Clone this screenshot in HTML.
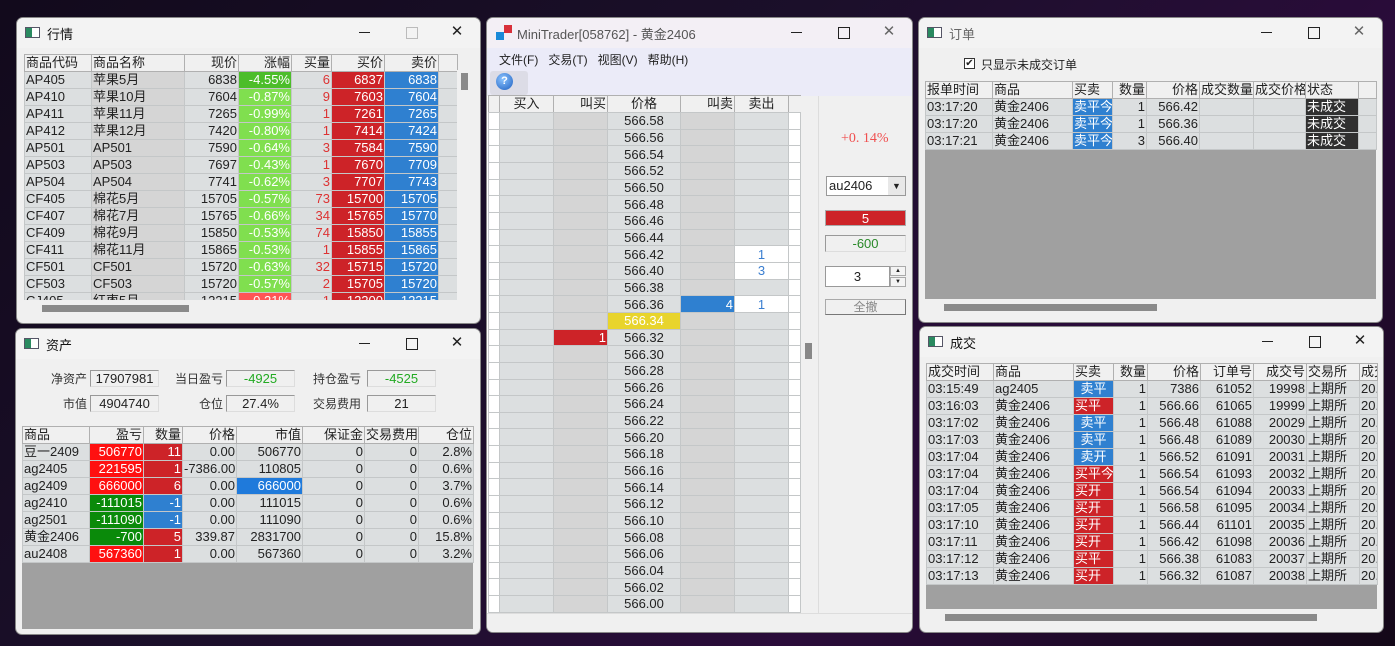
<!DOCTYPE html>
<html><head><meta charset="utf-8"><style>
*{box-sizing:border-box;margin:0;padding:0}
body{width:1395px;height:646px;overflow:hidden;position:relative;background:linear-gradient(135deg,#120a1c 0%,#1b0f2a 40%,#2a0c3a 70%,#140818 100%);font-family:"Liberation Sans","Noto Sans CJK SC",sans-serif;font-size:13px;color:#222}
.win{position:absolute;background:#f0f0f0;border-radius:7px;overflow:hidden;border:1px solid #888}
.tb{position:absolute;left:0;right:0;top:0;height:30px;background:#f3f3f3}
.tt{position:absolute;left:30px;top:6px;font-size:13px;color:#111}
.ic{position:absolute;left:8px;top:9px;width:15px;height:11px;border:1px solid #556;background:linear-gradient(90deg,#2a8a60 0 45%,#fff 45%)}
.btns{position:absolute;right:0;top:0;height:30px;width:138px}
.btns span{position:absolute;top:0;height:30px;width:46px;text-align:center;line-height:28px;font-size:15px;color:#222}
.mn{left:0}.mn:after{content:"";position:absolute;left:17px;top:14px;width:11px;height:1px;background:#222}
.mx{left:46px}.mx:after{content:"";position:absolute;left:18px;top:9px;width:10px;height:10px;border:1px solid #222}
.mx.dis:after{border-color:#bbb}
.cl{left:92px}
table{border-collapse:collapse;table-layout:fixed;position:absolute}
td{height:17px;line-height:16px;padding:0 1px;border:1px solid #c4c7c8;background:#dcdfe0;white-space:nowrap;overflow:hidden;font-size:13px;color:#222}
#dom td{height:16.67px;line-height:15px}
th{height:17px;line-height:16px;font-weight:normal;padding:0 1px;border:1px solid #b0b0b0;background:#f0f0f0;text-align:left;white-space:nowrap;overflow:hidden;font-size:13px;color:#222}
.r{text-align:right}.c{text-align:center}
.d{background:#d5d5d5}
.G{background:#80df4f;color:#fff}.G1{background:#4cbd2a;color:#fff}
.R{background:#cd2328;color:#fff}.B{background:#2f80d0;color:#fff}.RL{background:#ff5555;color:#fff}
.rt{color:#d33}
.RR{background:#ff1010;color:#fff}.GG{background:#0a8a0a;color:#fff}.BB{background:#1f7adb;color:#fff}
.K{background:#303030;color:#fff}
.gray{position:absolute;background:#a0a0a0}
.hs{position:absolute;height:17px;background:#f0f0f0}
.hs i{position:absolute;top:5px;height:7px;background:#8a8a8a}
.lbl{position:absolute;font-size:13px;color:#222}
.ra{width:80px;text-align:right;font-size:12px;color:#333}
.box{position:absolute;height:17px;border:1px solid #999;border-right-color:#ddd;border-bottom-color:#ddd;background:#f0f0f0;text-align:center;line-height:15px;font-size:13px}
</style></head><body>

<!-- 行情 -->
<div class="win" style="left:16px;top:17px;width:465px;height:307px">
 <div class="tb"><div class="ic"></div><div class="tt">行情</div><div class="btns"><span class="mn"></span><span class="mx dis"></span><span class="cl">✕</span></div></div>
 <table style="left:7px;top:36px;width:433px">
 <colgroup><col style="width:67px"><col style="width:93px"><col style="width:54px"><col style="width:53px"><col style="width:40px"><col style="width:53px"><col style="width:54px"><col style="width:19px"></colgroup>
 <tr><th>商品代码</th><th>商品名称</th><th class="r">现价</th><th class="r">涨幅</th><th class="r">买量</th><th class="r">买价</th><th class="r">卖价</th><th></th></tr>
 <tr><td>AP405</td><td class="d">苹果5月</td><td class="r">6838</td><td class="r G1">-4.55%</td><td class="r rt">6</td><td class="r R">6837</td><td class="r B">6838</td><td></td></tr>
 <tr><td>AP410</td><td class="d">苹果10月</td><td class="r">7604</td><td class="r G">-0.87%</td><td class="r rt">9</td><td class="r R">7603</td><td class="r B">7604</td><td></td></tr>
 <tr><td>AP411</td><td class="d">苹果11月</td><td class="r">7265</td><td class="r G">-0.99%</td><td class="r rt">1</td><td class="r R">7261</td><td class="r B">7265</td><td></td></tr>
 <tr><td>AP412</td><td class="d">苹果12月</td><td class="r">7420</td><td class="r G">-0.80%</td><td class="r rt">1</td><td class="r R">7414</td><td class="r B">7424</td><td></td></tr>
 <tr><td>AP501</td><td class="d">AP501</td><td class="r">7590</td><td class="r G">-0.64%</td><td class="r rt">3</td><td class="r R">7584</td><td class="r B">7590</td><td></td></tr>
 <tr><td>AP503</td><td class="d">AP503</td><td class="r">7697</td><td class="r G">-0.43%</td><td class="r rt">1</td><td class="r R">7670</td><td class="r B">7709</td><td></td></tr>
 <tr><td>AP504</td><td class="d">AP504</td><td class="r">7741</td><td class="r G">-0.62%</td><td class="r rt">3</td><td class="r R">7707</td><td class="r B">7743</td><td></td></tr>
 <tr><td>CF405</td><td class="d">棉花5月</td><td class="r">15705</td><td class="r G">-0.57%</td><td class="r rt">73</td><td class="r R">15700</td><td class="r B">15705</td><td></td></tr>
 <tr><td>CF407</td><td class="d">棉花7月</td><td class="r">15765</td><td class="r G">-0.66%</td><td class="r rt">34</td><td class="r R">15765</td><td class="r B">15770</td><td></td></tr>
 <tr><td>CF409</td><td class="d">棉花9月</td><td class="r">15850</td><td class="r G">-0.53%</td><td class="r rt">74</td><td class="r R">15850</td><td class="r B">15855</td><td></td></tr>
 <tr><td>CF411</td><td class="d">棉花11月</td><td class="r">15865</td><td class="r G">-0.53%</td><td class="r rt">1</td><td class="r R">15855</td><td class="r B">15865</td><td></td></tr>
 <tr><td>CF501</td><td class="d">CF501</td><td class="r">15720</td><td class="r G">-0.63%</td><td class="r rt">32</td><td class="r R">15715</td><td class="r B">15720</td><td></td></tr>
 <tr><td>CF503</td><td class="d">CF503</td><td class="r">15720</td><td class="r G">-0.57%</td><td class="r rt">2</td><td class="r R">15705</td><td class="r B">15720</td><td></td></tr>
 <tr><td>CJ405</td><td class="d">红枣5月</td><td class="r">12215</td><td class="r RL">0.21%</td><td class="r rt">1</td><td class="r R">12200</td><td class="r B">12215</td><td></td></tr>
 </table>
 <div style="position:absolute;left:440px;top:52px;width:16px;height:230px;background:#f0f0f0"><i style="position:absolute;left:4px;top:3px;width:7px;height:17px;background:#8a8a8a"></i></div>
 <div class="hs" style="left:7px;top:282px;width:449px"><i style="left:18px;width:147px"></i></div>
</div>

<!-- 资产 -->
<div class="win" style="left:15px;top:328px;width:466px;height:307px">
 <div class="tb"><div class="ic"></div><div class="tt">资产</div><div class="btns"><span class="mn"></span><span class="mx"></span><span class="cl">✕</span></div></div>
 <div class="lbl ra" style="left:-9px;top:41px">净资产</div><div class="box" style="left:74px;top:41px;width:69px">17907981</div>
 <div class="lbl ra" style="left:127px;top:41px">当日盈亏</div><div class="box" style="left:210px;top:41px;width:69px;color:#2a2">-4925</div>
 <div class="lbl ra" style="left:265px;top:41px">持仓盈亏</div><div class="box" style="left:351px;top:41px;width:69px;color:#2a2">-4525</div>
 <div class="lbl ra" style="left:-9px;top:66px">市值</div><div class="box" style="left:74px;top:66px;width:69px">4904740</div>
 <div class="lbl ra" style="left:127px;top:66px">仓位</div><div class="box" style="left:210px;top:66px;width:69px">27.4%</div>
 <div class="lbl ra" style="left:265px;top:66px">交易费用</div><div class="box" style="left:351px;top:66px;width:69px">21</div>
 <div class="gray" style="left:6px;top:97px;width:451px;height:203px"></div>
 <table style="left:6px;top:97px;width:451px">
 <colgroup><col style="width:67px"><col style="width:54px"><col style="width:39px"><col style="width:54px"><col style="width:66px"><col style="width:62px"><col style="width:54px"><col style="width:55px"></colgroup>
 <tr><th>商品</th><th class="r">盈亏</th><th class="r">数量</th><th class="r">价格</th><th class="r">市值</th><th class="r">保证金</th><th class="r">交易费用</th><th class="r">仓位</th></tr>
 <tr><td>豆一2409</td><td class="r RR">506770</td><td class="r R">11</td><td class="r">0.00</td><td class="r">506770</td><td class="r">0</td><td class="r">0</td><td class="r">2.8%</td></tr>
 <tr><td>ag2405</td><td class="r RR">221595</td><td class="r R">1</td><td class="r">-7386.00</td><td class="r">110805</td><td class="r">0</td><td class="r">0</td><td class="r">0.6%</td></tr>
 <tr><td>ag2409</td><td class="r RR">666000</td><td class="r R">6</td><td class="r">0.00</td><td class="r BB">666000</td><td class="r">0</td><td class="r">0</td><td class="r">3.7%</td></tr>
 <tr><td>ag2410</td><td class="r GG">-111015</td><td class="r B">-1</td><td class="r">0.00</td><td class="r">111015</td><td class="r">0</td><td class="r">0</td><td class="r">0.6%</td></tr>
 <tr><td>ag2501</td><td class="r GG">-111090</td><td class="r B">-1</td><td class="r">0.00</td><td class="r">111090</td><td class="r">0</td><td class="r">0</td><td class="r">0.6%</td></tr>
 <tr><td>黄金2406</td><td class="r GG">-700</td><td class="r R">5</td><td class="r">339.87</td><td class="r">2831700</td><td class="r">0</td><td class="r">0</td><td class="r">15.8%</td></tr>
 <tr><td>au2408</td><td class="r RR">567360</td><td class="r R">1</td><td class="r">0.00</td><td class="r">567360</td><td class="r">0</td><td class="r">0</td><td class="r">3.2%</td></tr>
 </table>
</div>

<!-- MiniTrader -->
<div class="win" style="left:486px;top:17px;width:427px;height:616px">
 <div class="tb" style="background:#f3eff5"><div style="position:absolute;left:9px;top:14px;width:8px;height:8px;background:#1a8ad8"></div><div style="position:absolute;left:17px;top:7px;width:8px;height:8px;background:#d8303a"></div><div class="tt" style="color:#555">MiniTrader[058762] - 黄金2406</div><div class="btns"><span class="mn"></span><span class="mx"></span><span class="cl" style="color:#666">✕</span></div></div>
 <div style="position:absolute;left:0;right:0;top:30px;height:48px;background:#ebebf8"></div>
 <div class="lbl" style="left:12px;top:33px;font-size:12px">文件(F)&nbsp;&nbsp; 交易(T)&nbsp;&nbsp; 视图(V)&nbsp;&nbsp; 帮助(H)</div>
 <div style="position:absolute;left:3px;top:53px;width:38px;height:24px;background:#dcdce6;border-radius:3px"></div>
 <div style="position:absolute;left:9px;top:55px;width:17px;height:17px;border-radius:50%;background:radial-gradient(circle at 40% 35%,#8cc4ff,#1d5fc0);color:#fff;font-size:11px;font-weight:bold;text-align:center;line-height:17px">?</div>
 <div style="position:absolute;left:0;top:78px;width:426px;height:517px;background:#fff"></div>
 <table style="left:1px;top:77px;width:312px">
 <colgroup><col style="width:11px"><col style="width:54px"><col style="width:54px"><col style="width:73px"><col style="width:54px"><col style="width:54px"><col style="width:12px"></colgroup>
 <tr><th></th><th class="c">买入</th><th class="r">叫买</th><th class="c">价格</th><th class="r">叫卖</th><th class="c">卖出</th><th></th></tr>
 </table>
 <div style="position:absolute;left:312px;top:78px;width:19px;height:517px;background:#f0f0f0"><i style="position:absolute;left:6px;top:247px;width:7px;height:16px;background:#888"></i></div>
 <div style="position:absolute;left:331px;top:78px;width:95px;height:517px;background:#f0f0f0;border-left:1px solid #ddd"></div>
 <table style="left:1px;top:94px;width:312px" id="dom">
 <colgroup><col style="width:11px"><col style="width:54px"><col style="width:54px"><col style="width:73px"><col style="width:54px"><col style="width:54px"><col style="width:12px"></colgroup>
 <tr><td style="background:#fff"></td><td></td><td class="d"></td><td class="c">566.58</td><td class="d"></td><td></td><td style="background:#fff"></td></tr>
 <tr><td style="background:#fff"></td><td></td><td class="d"></td><td class="c">566.56</td><td class="d"></td><td></td><td style="background:#fff"></td></tr>
 <tr><td style="background:#fff"></td><td></td><td class="d"></td><td class="c">566.54</td><td class="d"></td><td></td><td style="background:#fff"></td></tr>
 <tr><td style="background:#fff"></td><td></td><td class="d"></td><td class="c">566.52</td><td class="d"></td><td></td><td style="background:#fff"></td></tr>
 <tr><td style="background:#fff"></td><td></td><td class="d"></td><td class="c">566.50</td><td class="d"></td><td></td><td style="background:#fff"></td></tr>
 <tr><td style="background:#fff"></td><td></td><td class="d"></td><td class="c">566.48</td><td class="d"></td><td></td><td style="background:#fff"></td></tr>
 <tr><td style="background:#fff"></td><td></td><td class="d"></td><td class="c">566.46</td><td class="d"></td><td></td><td style="background:#fff"></td></tr>
 <tr><td style="background:#fff"></td><td></td><td class="d"></td><td class="c">566.44</td><td class="d"></td><td></td><td style="background:#fff"></td></tr>
 <tr><td style="background:#fff"></td><td></td><td class="d"></td><td class="c">566.42</td><td class="d"></td><td class="c" style="background:#fff;color:#3a7ed0">1</td><td style="background:#fff"></td></tr>
 <tr><td style="background:#fff"></td><td></td><td class="d"></td><td class="c">566.40</td><td class="d"></td><td class="c" style="background:#fff;color:#3a7ed0">3</td><td style="background:#fff"></td></tr>
 <tr><td style="background:#fff"></td><td></td><td class="d"></td><td class="c">566.38</td><td class="d"></td><td></td><td style="background:#fff"></td></tr>
 <tr><td style="background:#fff"></td><td></td><td class="d"></td><td class="c">566.36</td><td class="r B">4</td><td class="c" style="background:#fff;color:#3a7ed0">1</td><td style="background:#fff"></td></tr>
 <tr><td style="background:#fff"></td><td></td><td class="d"></td><td class="c" style="background:#e8d42c;color:#fff">566.34</td><td class="d"></td><td></td><td style="background:#fff"></td></tr>
 <tr><td style="background:#fff"></td><td></td><td class="r R">1</td><td class="c">566.32</td><td class="d"></td><td></td><td style="background:#fff"></td></tr>
 <tr><td style="background:#fff"></td><td></td><td class="d"></td><td class="c">566.30</td><td class="d"></td><td></td><td style="background:#fff"></td></tr>
 <tr><td style="background:#fff"></td><td></td><td class="d"></td><td class="c">566.28</td><td class="d"></td><td></td><td style="background:#fff"></td></tr>
 <tr><td style="background:#fff"></td><td></td><td class="d"></td><td class="c">566.26</td><td class="d"></td><td></td><td style="background:#fff"></td></tr>
 <tr><td style="background:#fff"></td><td></td><td class="d"></td><td class="c">566.24</td><td class="d"></td><td></td><td style="background:#fff"></td></tr>
 <tr><td style="background:#fff"></td><td></td><td class="d"></td><td class="c">566.22</td><td class="d"></td><td></td><td style="background:#fff"></td></tr>
 <tr><td style="background:#fff"></td><td></td><td class="d"></td><td class="c">566.20</td><td class="d"></td><td></td><td style="background:#fff"></td></tr>
 <tr><td style="background:#fff"></td><td></td><td class="d"></td><td class="c">566.18</td><td class="d"></td><td></td><td style="background:#fff"></td></tr>
 <tr><td style="background:#fff"></td><td></td><td class="d"></td><td class="c">566.16</td><td class="d"></td><td></td><td style="background:#fff"></td></tr>
 <tr><td style="background:#fff"></td><td></td><td class="d"></td><td class="c">566.14</td><td class="d"></td><td></td><td style="background:#fff"></td></tr>
 <tr><td style="background:#fff"></td><td></td><td class="d"></td><td class="c">566.12</td><td class="d"></td><td></td><td style="background:#fff"></td></tr>
 <tr><td style="background:#fff"></td><td></td><td class="d"></td><td class="c">566.10</td><td class="d"></td><td></td><td style="background:#fff"></td></tr>
 <tr><td style="background:#fff"></td><td></td><td class="d"></td><td class="c">566.08</td><td class="d"></td><td></td><td style="background:#fff"></td></tr>
 <tr><td style="background:#fff"></td><td></td><td class="d"></td><td class="c">566.06</td><td class="d"></td><td></td><td style="background:#fff"></td></tr>
 <tr><td style="background:#fff"></td><td></td><td class="d"></td><td class="c">566.04</td><td class="d"></td><td></td><td style="background:#fff"></td></tr>
 <tr><td style="background:#fff"></td><td></td><td class="d"></td><td class="c">566.02</td><td class="d"></td><td></td><td style="background:#fff"></td></tr>
 <tr><td style="background:#fff"></td><td></td><td class="d"></td><td class="c">566.00</td><td class="d"></td><td></td><td style="background:#fff"></td></tr>
 </table>
 <div style="position:absolute;left:0;right:0;top:595px;height:21px;background:#f0f0f0;border-top:1px solid #ddd"></div>
 <div class="lbl" style="left:354px;top:113px;color:#f05050;font-family:'Liberation Serif','Noto Serif CJK SC',serif;font-size:14px">+0. 14%</div>
 <div style="position:absolute;left:339px;top:158px;width:80px;height:20px;background:#fff;border:1px solid #999;font-size:13px;line-height:18px;padding-left:2px">au2406<span style="position:absolute;right:0;top:0;width:17px;height:18px;background:#e8e8e8;text-align:center;font-size:9px;line-height:18px">▼</span></div>
 <div style="position:absolute;left:338px;top:192px;width:81px;height:16px;background:#cd2328;color:#fff;text-align:center;line-height:16px;border:1px solid #aaa">5</div>
 <div class="box" style="left:338px;top:217px;width:81px;color:#2a8a2a">-600</div>
 <div style="position:absolute;left:338px;top:248px;width:65px;height:21px;background:#fff;border:1px solid #999;text-align:center;line-height:19px">3</div>
 <div style="position:absolute;left:403px;top:248px;width:16px;height:10px;border:1px solid #aaa;font-size:6px;text-align:center;line-height:8px;background:#f4f4f4">▲</div>
 <div style="position:absolute;left:403px;top:259px;width:16px;height:10px;border:1px solid #aaa;font-size:6px;text-align:center;line-height:8px;background:#f4f4f4">▼</div>
 <div style="position:absolute;left:338px;top:281px;width:81px;height:16px;border:1px solid #aaa;border-right-color:#777;border-bottom-color:#777;text-align:center;line-height:14px;color:#888;font-size:12px;background:#f0f0f0">全撤</div>
</div>

<!-- 订单 -->
<div class="win" style="left:918px;top:17px;width:465px;height:306px">
 <div class="tb"><div class="ic"></div><div class="tt" style="color:#666">订单</div><div class="btns"><span class="mn"></span><span class="mx"></span><span class="cl" style="color:#666">✕</span></div></div>
 <div style="position:absolute;left:45px;top:40px;width:11px;height:11px;border:1px solid #333;background:#fff;font-size:10px;line-height:9px;text-align:center">✔</div>
 <div class="lbl" style="left:62px;top:38px;font-size:12px">只显示未成交订单</div>
 <div class="gray" style="left:6px;top:63px;width:451px;height:218px"></div>
 <table style="left:6px;top:63px;width:451px">
 <colgroup><col style="width:67px"><col style="width:80px"><col style="width:40px"><col style="width:34px"><col style="width:53px"><col style="width:54px"><col style="width:52px"><col style="width:53px"><col style="width:18px"></colgroup>
 <tr><th>报单时间</th><th>商品</th><th>买卖</th><th class="r">数量</th><th class="r">价格</th><th class="r">成交数量</th><th class="r">成交价格</th><th>状态</th><th></th></tr>
 <tr><td>03:17:20</td><td>黄金2406</td><td class="B">卖平今</td><td class="r">1</td><td class="r">566.42</td><td></td><td></td><td class="K">未成交</td><td></td></tr>
 <tr><td>03:17:20</td><td>黄金2406</td><td class="B">卖平今</td><td class="r">1</td><td class="r">566.36</td><td></td><td></td><td class="K">未成交</td><td></td></tr>
 <tr><td>03:17:21</td><td>黄金2406</td><td class="B">卖平今</td><td class="r">3</td><td class="r">566.40</td><td></td><td></td><td class="K">未成交</td><td></td></tr>
 </table>
 <div class="hs" style="left:7px;top:281px;width:450px"><i style="left:18px;width:213px"></i></div>
</div>

<!-- 成交 -->
<div class="win" style="left:919px;top:326px;width:465px;height:307px">
 <div class="tb"><div class="ic"></div><div class="tt">成交</div><div class="btns"><span class="mn"></span><span class="mx"></span><span class="cl">✕</span></div></div>
 <div class="gray" style="left:6px;top:36px;width:451px;height:246px"></div>
 <table style="left:6px;top:36px;width:451px">
 <colgroup><col style="width:67px"><col style="width:80px"><col style="width:40px"><col style="width:34px"><col style="width:53px"><col style="width:53px"><col style="width:53px"><col style="width:53px"><col style="width:18px"></colgroup>
 <tr><th>成交时间</th><th>商品</th><th>买卖</th><th class="r">数量</th><th class="r">价格</th><th class="r">订单号</th><th class="r">成交号</th><th>交易所</th><th>成交</th></tr>
 <tr><td>03:15:49</td><td>ag2405</td><td class="B c">卖平</td><td class="r">1</td><td class="r">7386</td><td class="r">61052</td><td class="r">19998</td><td>上期所</td><td>20.</td></tr>
 <tr><td>03:16:03</td><td>黄金2406</td><td class="R">买平</td><td class="r">1</td><td class="r">566.66</td><td class="r">61065</td><td class="r">19999</td><td>上期所</td><td>20.</td></tr>
 <tr><td>03:17:02</td><td>黄金2406</td><td class="B c">卖平</td><td class="r">1</td><td class="r">566.48</td><td class="r">61088</td><td class="r">20029</td><td>上期所</td><td>20.</td></tr>
 <tr><td>03:17:03</td><td>黄金2406</td><td class="B c">卖平</td><td class="r">1</td><td class="r">566.48</td><td class="r">61089</td><td class="r">20030</td><td>上期所</td><td>20.</td></tr>
 <tr><td>03:17:04</td><td>黄金2406</td><td class="B c">卖开</td><td class="r">1</td><td class="r">566.52</td><td class="r">61091</td><td class="r">20031</td><td>上期所</td><td>20.</td></tr>
 <tr><td>03:17:04</td><td>黄金2406</td><td class="R">买平今</td><td class="r">1</td><td class="r">566.54</td><td class="r">61093</td><td class="r">20032</td><td>上期所</td><td>20.</td></tr>
 <tr><td>03:17:04</td><td>黄金2406</td><td class="R">买开</td><td class="r">1</td><td class="r">566.54</td><td class="r">61094</td><td class="r">20033</td><td>上期所</td><td>20.</td></tr>
 <tr><td>03:17:05</td><td>黄金2406</td><td class="R">买开</td><td class="r">1</td><td class="r">566.58</td><td class="r">61095</td><td class="r">20034</td><td>上期所</td><td>20.</td></tr>
 <tr><td>03:17:10</td><td>黄金2406</td><td class="R">买开</td><td class="r">1</td><td class="r">566.44</td><td class="r">61101</td><td class="r">20035</td><td>上期所</td><td>20.</td></tr>
 <tr><td>03:17:11</td><td>黄金2406</td><td class="R">买开</td><td class="r">1</td><td class="r">566.42</td><td class="r">61098</td><td class="r">20036</td><td>上期所</td><td>20.</td></tr>
 <tr><td>03:17:12</td><td>黄金2406</td><td class="R">买平</td><td class="r">1</td><td class="r">566.38</td><td class="r">61083</td><td class="r">20037</td><td>上期所</td><td>20.</td></tr>
 <tr><td>03:17:13</td><td>黄金2406</td><td class="R">买开</td><td class="r">1</td><td class="r">566.32</td><td class="r">61087</td><td class="r">20038</td><td>上期所</td><td>20.</td></tr>
 </table>
 <div class="hs" style="left:7px;top:282px;width:450px"><i style="left:18px;width:372px"></i></div>
</div>
</body></html>
